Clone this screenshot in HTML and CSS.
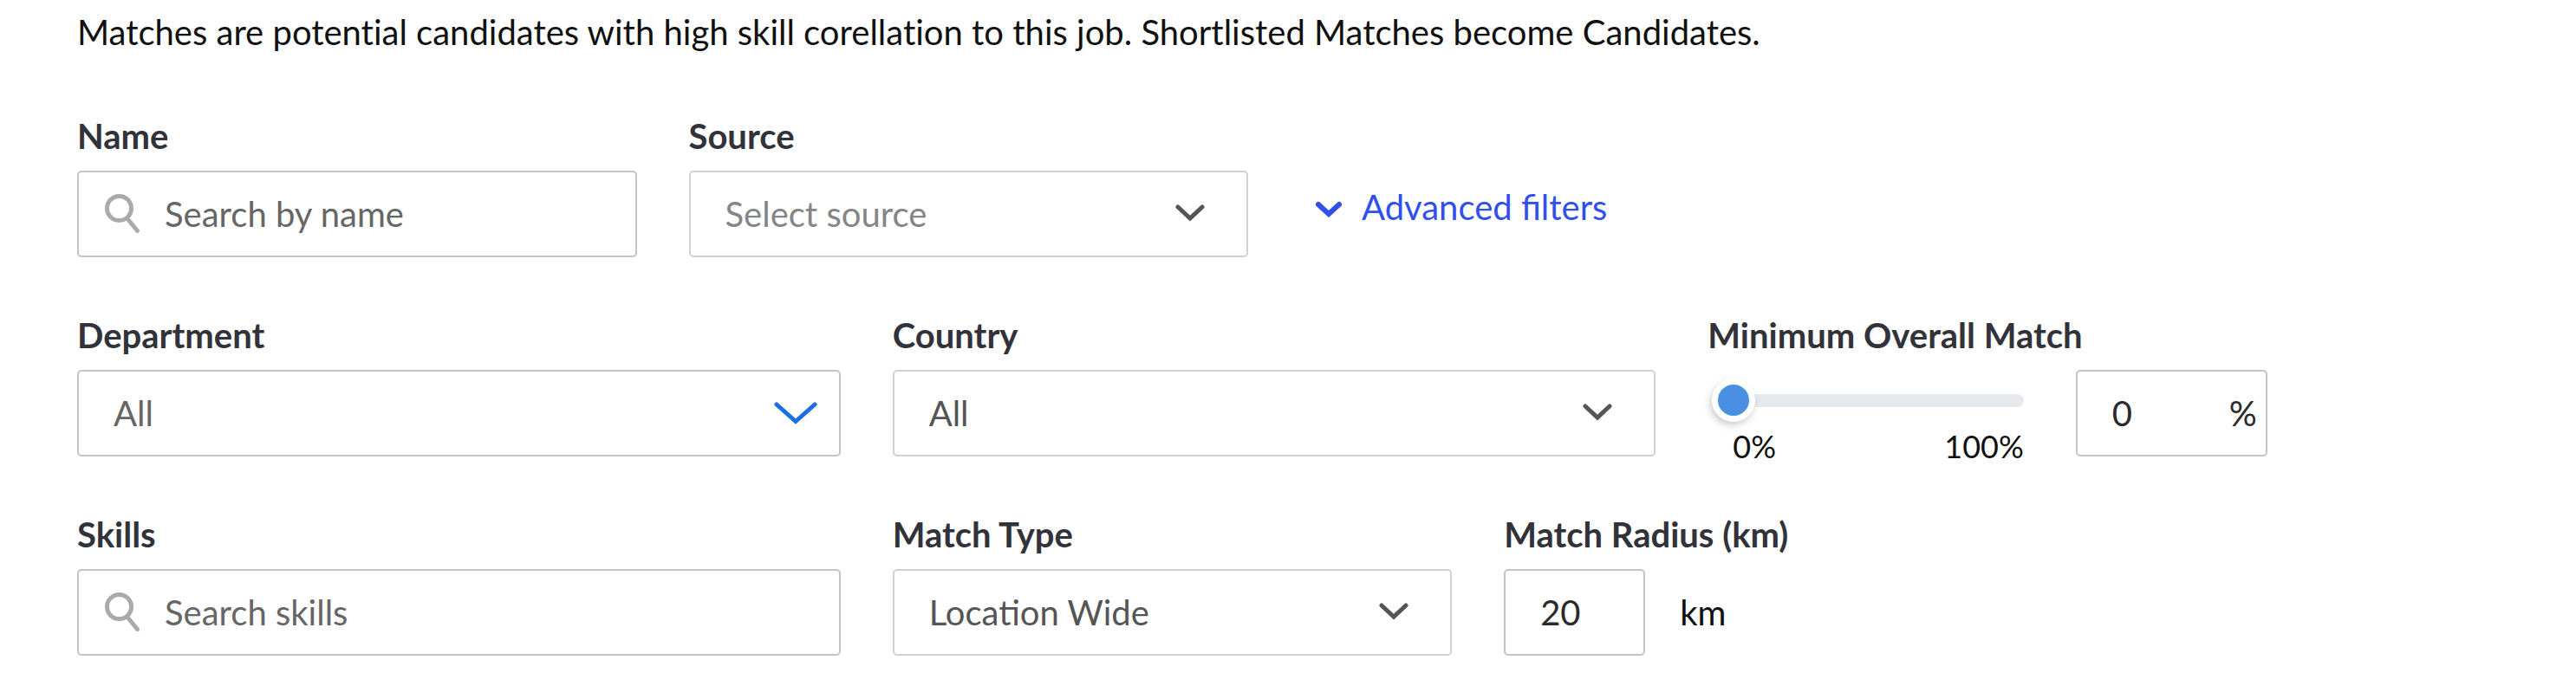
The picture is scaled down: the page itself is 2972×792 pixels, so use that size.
FILE: index.html
```html
<!DOCTYPE html>
<html lang="en">
<head>
  <meta charset="UTF-8" />
  <meta name="viewport" content="width=device-width, initial-scale=1.0" />
  <title>Matches</title>
  <link rel="stylesheet" href="styles.css">
</head>
<body>
  <main class="matches">
    <p class="intro">Matches are potential candidates with high skill corellation to this job. Shortlisted Matches become Candidates.</p>

    <form class="filters">
      <!-- basic filters -->
      <div class="row">
        <div class="field">
          <label for="name">Name</label>
          <div class="control">
            <svg class="search-icon" viewBox="0 0 40 46"><circle cx="16.5" cy="16.5" r="14" /><path d="M26 28.5 L37.5 42.5" /></svg>
            <input class="box search" id="name" type="text" placeholder="Search by name">
          </div>
        </div>
        <div class="field">
          <label for="source">Source</label>
          <div class="control">
            <select class="box empty" id="source">
              <option>Select source</option>
            </select>
            <svg class="arrow" viewBox="0 0 34 20"><path d="M3 3 L17 16 L31 3" /></svg>
          </div>
        </div>
        <div class="field toggle-field">
          <button class="toggle" type="button">
            <svg class="toggle-icon" viewBox="0 0 30 24"><path d="M3 9 L15 20 L27 9" /></svg>
            Advanced filters
          </button>
        </div>
      </div>

      <!-- advanced filters -->
      <div class="row">
        <div class="field wide">
          <label for="department">Department</label>
          <div class="control">
            <select class="box department" id="department">
              <option>All</option>
            </select>
            <svg class="arrow blue" viewBox="0 0 50 28"><path d="M3 3 L25 22.5 L47 3" /></svg>
          </div>
        </div>
        <div class="field wide">
          <label for="country">Country</label>
          <div class="control">
            <select class="box" id="country">
              <option>All</option>
            </select>
            <svg class="arrow" viewBox="0 0 34 20"><path d="M3 3 L17 16 L31 3" /></svg>
          </div>
        </div>
        <div class="field">
          <label for="match">Minimum Overall Match</label>
          <div class="match">
            <div class="slider">
              <input class="range" id="match" type="range" min="0" max="100" value="0">
              <div class="scale"><span>0%</span><span>100%</span></div>
            </div>
            <div class="control percent">
              <input class="box number" id="matchValue" type="text" inputmode="numeric" value="0" aria-label="Minimum overall match, percent">
              <span class="suffix">%</span>
            </div>
          </div>
        </div>
      </div>

      <div class="row">
        <div class="field wide">
          <label for="skills">Skills</label>
          <div class="control">
            <svg class="search-icon" viewBox="0 0 40 46"><circle cx="16.5" cy="16.5" r="14" /><path d="M26 28.5 L37.5 42.5" /></svg>
            <input class="box search" id="skills" type="text" placeholder="Search skills">
          </div>
        </div>
        <div class="field">
          <label for="matchType">Match Type</label>
          <div class="control">
            <select class="box" id="matchType">
              <option>Location Wide</option>
            </select>
            <svg class="arrow" viewBox="0 0 34 20"><path d="M3 3 L17 16 L31 3" /></svg>
          </div>
        </div>
        <div class="field">
          <label for="radius">Match Radius (km)</label>
          <div class="radius">
            <input class="box number" id="radius" type="text" inputmode="numeric" value="20">
            <span>km</span>
          </div>
        </div>
      </div>
    </form>
  </main>

  <script>
    const range = document.getElementById("match");
    const matchValue = document.getElementById("matchValue");

    range.addEventListener("input", () => { matchValue.value = range.value; });
    matchValue.addEventListener("change", () => { range.value = matchValue.value; });
  </script>
</body>
</html>
```

FILE: styles.css
```css
* { box-sizing: border-box; }
body {
  margin: 0;
  background: #fff;
  color: #111;
  font-family: Lato, "Liberation Sans", sans-serif;
  font-size: 40px;
  line-height: 48px;
}
.matches {
  padding: 13px 121px 16px 89px;
}
.intro {
  margin: 0 0 72px;
  font-variant-ligatures: none;
}
.filters {
  display: flex;
  flex-direction: column;
  gap: 50px;
}
.row {
  display: grid;
  grid-template-columns: repeat(12, 1fr);
  column-gap: 60px;
  min-height: 180px;
}
.field {
  grid-column: span 3;
}
.field.wide {
  grid-column: span 4;
}
label {
  display: block;
  margin-bottom: 16px;
  color: #32323a;
  font-weight: bold;
}
.control {
  position: relative;
}
.box {
  display: block;
  width: 100%;
  height: 100px;
  margin: 0;
  padding: 0 40px;
  border: 2px solid #c4c4cb;
  border-radius: 5px;
  background: #fff;
  color: #2b2b2b;
  font: inherit;
  appearance: none;
}
.box.search {
  padding-left: 99px;
}
.box::placeholder {
  color: #666;
  opacity: 1;
}
select.box {
  border-color: #d0d0d5;
  color: #555;
}
select.box.empty {
  color: #858585;
}
select.box.department {
  border-color: #c4c4cb;
  color: #666;
}
svg {
  fill: none;
}
.search-icon {
  position: absolute;
  top: 27px;
  left: 32px;
  width: 40px;
  height: 46px;
  stroke: #aaa;
  stroke-width: 5;
  stroke-linecap: round;
}
.arrow {
  position: absolute;
  top: 39px;
  right: 50px;
  width: 34px;
  height: 20px;
  stroke: #555;
  stroke-width: 5;
  stroke-linecap: round;
  pointer-events: none;
}
.arrow.blue {
  top: 37px;
  right: 27px;
  width: 50px;
  height: 28px;
  stroke: #1c6fe0;
}
.toggle-field {
  padding-top: 82px;
}
.toggle {
  display: flex;
  align-items: center;
  gap: 23px;
  padding: 0 18px;
  border: 0;
  background: none;
  color: #304fec;
  font: inherit;
  white-space: nowrap;
  cursor: pointer;
}
.toggle-icon {
  width: 30px;
  height: 24px;
  stroke: #304fec;
  stroke-width: 6;
  stroke-linecap: round;
}

/* match slider */
.match {
  display: flex;
  gap: 60px;
}
.slider {
  flex: 1;
  padding: 10px 0 0 5px;
}
.range {
  display: block;
  width: 100%;
  height: 50px;
  margin: 0;
  background: none;
  appearance: none;
}
.range::-webkit-slider-runnable-track {
  height: 15px;
  border-radius: 8px;
  background: #e6eaed;
}
.range::-webkit-slider-thumb {
  width: 50px;
  height: 50px;
  margin-top: -18px;
  border: 7px solid #fff;
  border-radius: 50%;
  background: #4a90e2;
  box-shadow: -2px 4px 8px rgba(0, 0, 0, 0.2);
  appearance: none;
}
.scale {
  display: flex;
  justify-content: space-between;
  padding-left: 24px;
  font-size: 36px;
  line-height: 56px;
}
.percent {
  width: 221px;
}
.suffix {
  position: absolute;
  top: 26px;
  right: 12px;
  color: #2b2b2b;
}
.radius {
  display: flex;
  align-items: center;
  gap: 40px;
}
.radius .box {
  width: 163px;
}
```
